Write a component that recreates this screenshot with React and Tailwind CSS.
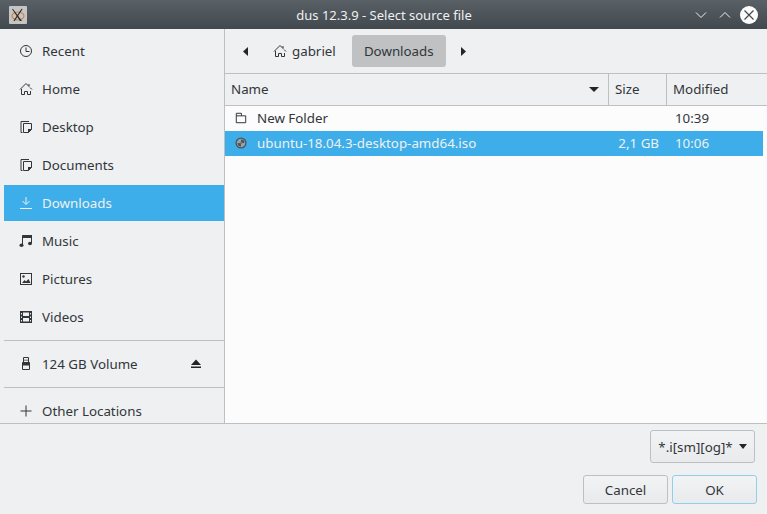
import React from 'react';

const Svg = ({ className = '', size = 14, children }) => (
  <svg
    width={size}
    height={size}
    viewBox="0 0 14 14"
    fill="none"
    stroke="currentColor"
    strokeWidth="1"
    className={`shrink-0 ${className}`}
  >
    {children}
  </svg>
);

const IconClock = () => (
  <Svg>
    <circle cx="7" cy="7" r="5.5" />
    <path d="M7 3.5V7.5H10.5" />
  </Svg>
);

const IconHome = () => (
  <Svg>
    <path d="M1 7.5L7 1.5L10 4.5M10 2V4.5M13 7.5L11 5.5M2.5 7V12.5H5.5V9.5H8.5V12.5H11.5V9" />
  </Svg>
);

const IconDoc = () => (
  <Svg>
    <path d="M3.5 12.5H2V1.5H10" />
    <path d="M4.5 3.5H12.5V9.5L9.5 12.5H4.5Z" />
    <path d="M9 13L13 9H9Z" fill="currentColor" stroke="none" />
  </Svg>
);

const IconDownload = () => (
  <Svg>
    <path d="M7 1V8M3.5 5L7 8.5L10.5 5M1 12.5H13" />
  </Svg>
);

const IconMusic = () => (
  <Svg>
    <path d="M3.5 11V1.5H12.5V9" strokeWidth="1" />
    <path d="M3.5 1H13V4H3.5Z" fill="currentColor" stroke="none" />
    <ellipse cx="2.5" cy="11.3" rx="2" ry="1.7" fill="currentColor" stroke="none" />
    <ellipse cx="11" cy="9.5" rx="2" ry="1.7" fill="currentColor" stroke="none" />
  </Svg>
);

const IconPicture = () => (
  <Svg>
    <rect x="1.5" y="1.5" width="11" height="11" />
    <circle cx="4.5" cy="4.5" r="1.2" fill="currentColor" stroke="none" />
    <path d="M3 11L5.5 8L7 9.5L9.5 7L11.5 11Z" fill="currentColor" stroke="none" />
  </Svg>
);

const IconFilm = () => (
  <Svg>
    <path d="M1 1H13V13H1Z" fill="currentColor" stroke="none" />
    <path d="M4 2.5H10V6H4ZM4 8H10V11.5H4Z" fill="#eff0f1" stroke="none" />
    <path d="M2 3H3V4.5H2ZM2 6.5H3V8H2ZM2 10H3V11.5H2ZM11 3H12V4.5H11ZM11 6.5H12V8H11ZM11 10H12V11.5H11Z" fill="#eff0f1" stroke="none" />
  </Svg>
);

const IconUsb = () => (
  <Svg>
    <path d="M4.5 0.5H9.5V6.5M4.5 0.5V6.5M3.5 5.5H10.5V12.5H3.5Z" />
    <path d="M6 2.5V4M8 2.5V4" />
    <path d="M3.5 5.5H10.5V8.5H3.5Z" fill="currentColor" stroke="none" />
  </Svg>
);

const IconPlus = () => (
  <Svg>
    <path d="M7 1.5V12.5M1.5 7H12.5" />
  </Svg>
);

const IconFolder = () => (
  <Svg size={12} className="mx-px">
    <path d="M1.5 1.5H7.5V4.5H12.5V12.5H1.5ZM1.5 4.5H7.5" strokeWidth="1.15" />
  </Svg>
);

// grey disc with the two light wedges, the mimetype icon of the iso file
const IconDisc = () => (
  <svg width="12" height="12" viewBox="0 0 14 14" className="mx-px shrink-0">
    <circle cx="7" cy="7" r="6.5" fill="#4d5358" />
    <circle cx="7" cy="7" r="5" fill="#8fa3b1" />
    <path d="M7 3A4 4 0 0 1 11 7H8.5A1.5 1.5 0 0 0 7 5.5ZM7 11A4 4 0 0 1 3 7H5.5A1.5 1.5 0 0 0 7 8.5Z" fill="#4d5358" />
    <circle cx="7" cy="7" r="1" fill="#4d5358" />
  </svg>
);

const places = [
  ['Recent', IconClock],
  ['Home', IconHome],
  ['Desktop', IconDoc],
  ['Documents', IconDoc],
  ['Downloads', IconDownload],
  ['Music', IconMusic],
  ['Pictures', IconPicture],
  ['Videos', IconFilm],
];

function SidebarRow({ label, icon: Icon, selected, children }) {
  return (
    <div
      className={`flex h-9 shrink-0 items-center pl-[15px] ${
        selected ? 'bg-[#3daee9] text-[#eff0f1]' : 'text-[#31363b]'
      }`}
    >
      <Icon />
      <span className="ml-[9px] flex-1 whitespace-nowrap">{label}</span>
      {children}
    </div>
  );
}

export default function App() {
  return (
    <div className="flex h-[514px] w-[767px] flex-col overflow-hidden bg-[#eff0f1] font-['Noto_Sans',sans-serif] text-[13.33px] leading-[18px] text-[#31363b]">
      {/* title bar */}
      <div className="flex h-[29px] shrink-0 items-center bg-gradient-to-b from-[#596066] to-[#41494f] pl-[9px] pr-[9px] text-[#eff0f1]">
        <div className="w-[64px]">
          <div className="flex h-[18px] w-[18px] items-center justify-center rounded-[1px] bg-[#c4c6c6]">
            <svg width="16" height="16" viewBox="0 0 16 16" fill="none">
              <ellipse cx="8" cy="9" rx="6" ry="4" stroke="#d9803f" strokeWidth="1.2" />
              <path d="M3 2L12 14H10L2 2Z" fill="#26282a" />
              <path d="M12 2L4 14" stroke="#26282a" strokeWidth="1.2" />
            </svg>
          </div>
        </div>
        <div className="flex-1 text-center text-[13px]">dus 12.3.9 - Select source file</div>
        <svg width="12" height="8" viewBox="0 0 12 8" fill="none" stroke="#eff0f1" className="mr-[12px]">
          <path d="M1 1.5L6 6.5L11 1.5" />
        </svg>
        <svg width="12" height="8" viewBox="0 0 12 8" fill="none" stroke="#eff0f1" className="mr-[9px]">
          <path d="M1 6.5L6 1.5L11 6.5" />
        </svg>
        <svg width="18" height="18" viewBox="0 0 18 18">
          <circle cx="9" cy="9" r="9" fill="#fcfcfc" />
          <path d="M4.5 4.5L13.5 13.5M13.5 4.5L4.5 13.5" stroke="#41494f" strokeWidth="1.2" />
        </svg>
      </div>

      <div className="flex h-[395px] shrink-0 border-b border-[#bdc0c2]">
        {/* places */}
        <div className="flex w-[225px] shrink-0 flex-col gap-0.5 overflow-hidden border-r border-[#bdc0c2] pl-1 pt-1">
          {places.map(([label, Icon]) => (
            <SidebarRow key={label} label={label} icon={Icon} selected={label === 'Downloads'} />
          ))}
          <div className="mt-[3px] h-px shrink-0 bg-[#bdc0c2]" />
          <div className="mt-[3px]">
            <SidebarRow label="124 GB Volume" icon={IconUsb}>
              <svg width="12" height="10" viewBox="0 0 12 10" className="mr-[22px] fill-[#232629]">
                <path d="M6 0.5L11 6H1ZM1 7.5H11V9H1Z" />
              </svg>
            </SidebarRow>
          </div>
          <div className="mt-[3px] h-px shrink-0 bg-[#bdc0c2]" />
          <div className="mt-[3px]">
            <SidebarRow label="Other Locations" icon={IconPlus} />
          </div>
        </div>

        {/* files */}
        <div className="flex min-w-0 flex-1 flex-col">
          <div className="flex h-[45px] shrink-0 items-center border-b border-[#bdc0c2] pl-[18px]">
            <svg width="5" height="9" viewBox="0 0 5 9" className="fill-[#232629]">
              <path d="M5 0V9L0 4.5Z" />
            </svg>
            <div className="ml-[25px] flex items-center">
              <IconHome />
              <span className="ml-[5px]">gabriel</span>
            </div>
            <div className="ml-[16px] flex h-8 w-[94px] items-center justify-center rounded-[3px] bg-[#bfc1c3]">
              Downloads
            </div>
            <svg width="5" height="9" viewBox="0 0 5 9" className="ml-[15px] fill-[#232629]">
              <path d="M0 0V9L5 4.5Z" />
            </svg>
          </div>

          <div className="flex h-8 shrink-0 items-stretch border-b border-[#bdc0c2] pr-1">
            <div className="flex w-[384px] items-center border-r border-[#bdc0c2] pb-px pl-[6px] pr-[9px]">
              <span className="flex-1">Name</span>
              <svg width="10" height="5" viewBox="0 0 10 5" className="fill-[#232629]">
                <path d="M0 0H10L5 5Z" />
              </svg>
            </div>
            <div className="flex w-[58px] items-center border-r border-[#bdc0c2] pb-px pl-[6px]">Size</div>
            <div className="flex flex-1 items-center pb-px pl-[6px]">Modified</div>
          </div>

          <div className="flex-1 bg-[#fcfcfc] pr-1 text-[#31363b]">
            <div className="flex h-[25px] items-center pb-px">
              <div className="flex w-[384px] items-center pl-[9px]">
                <IconFolder />
                <span className="ml-[9px]">New Folder</span>
              </div>
              <div className="w-[58px]" />
              <div className="pl-2">10:39</div>
            </div>
            <div className="flex h-[25px] items-center bg-[#3daee9] pb-px text-[#eff0f1]">
              <div className="flex w-[384px] items-center pl-[9px]">
                <IconDisc />
                <span className="ml-[9px]">ubuntu-18.04.3-desktop-amd64.iso</span>
              </div>
              <div className="w-[50px] text-right">2,1 GB</div>
              <div className="pl-4">10:06</div>
            </div>
          </div>
        </div>
      </div>

      {/* footer */}
      <div className="flex flex-1 flex-col items-end pr-[10px] pt-[6px]">
        <div className="mr-[2px] flex h-[33px] w-[105px] items-center justify-center gap-[6px] rounded-[3px] border border-[#bdc0c2] bg-gradient-to-b from-[#f2f3f4] to-[#e9eaeb]">
          <span>*.i[sm][og]*</span>
          <svg width="8" height="5" viewBox="0 0 8 5" className="fill-[#232629]">
            <path d="M0 0H8L4 5Z" />
          </svg>
        </div>
        <div className="mt-[12px] flex gap-1">
          <div className="flex h-[29px] w-[85px] items-center justify-center rounded-[3px] border border-[#bdc0c2] bg-gradient-to-b from-[#f2f3f4] to-[#e9eaeb]">
            Cancel
          </div>
          <div className="flex h-[29px] w-[85px] items-center justify-center rounded-[3px] border border-[#93cee9] bg-gradient-to-b from-[#f2f3f4] to-[#e9eaeb]">
            OK
          </div>
        </div>
      </div>
    </div>
  );
}
